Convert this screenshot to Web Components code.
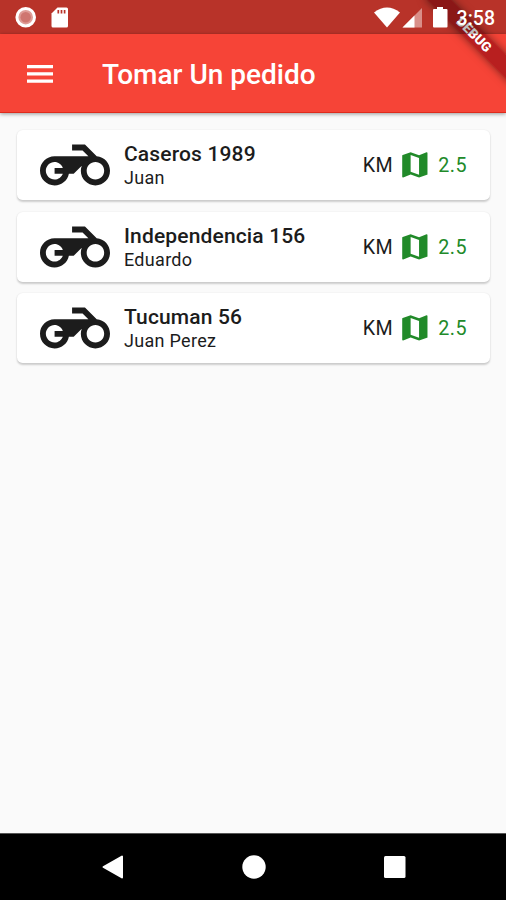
<!DOCTYPE html>
<html lang="es">
<head>
<meta charset="utf-8">
<title>Tomar Un pedido</title>
<style>
html,body{margin:0;height:100%;overflow:hidden}
body{font-family:Roboto,"Liberation Sans",sans-serif}
</style>
</head>
<body>
<phone-screen>
  <status-bar slot="status">3:58</status-bar>
  <debug-banner slot="banner">DEBUG</debug-banner>
  <app-header slot="header">Tomar Un pedido</app-header>
  <order-card km="2.5"><span slot="address">Caseros 1989</span><span slot="customer">Juan</span></order-card>
  <order-card km="2.5"><span slot="address">Independencia 156</span><span slot="customer">Eduardo</span></order-card>
  <order-card km="2.5"><span slot="address">Tucuman 56</span><span slot="customer">Juan Perez</span></order-card>
  <nav-bar slot="nav"></nav-bar>
</phone-screen>
<script>
const define = (name, html) => {
  customElements.define(name, class extends HTMLElement {
    constructor() {
      super();
      this.attachShadow({mode: 'open'}).innerHTML = html;
    }
    connectedCallback() {
      const km = this.shadowRoot.querySelector('.distance');
      if (km) km.textContent = this.getAttribute('km');
    }
  });
};

define('phone-screen', `
<style>
:host{display:flex;flex-direction:column;position:relative;width:506px;height:900px;overflow:hidden;background:linear-gradient(#f64437 34px,#fafafa 34px)}
main{flex:1;display:flex;flex-direction:column;gap:11.6px;padding:17px 16px 0 17px;min-height:0}
</style>
<slot name="status"></slot><slot name="header"></slot>
<main><slot></slot></main>
<slot name="nav"></slot><slot name="banner"></slot>`);

define('status-bar', `
<style>
:host{display:flex;flex:none;position:relative;z-index:3;height:34px;box-sizing:border-box;background:rgba(0,0,0,.25);color:#fff;font-size:19.5px;font-weight:500;line-height:37px}
svg{flex:none;display:block;width:456px}
.time{width:50px;box-sizing:border-box;padding-right:11px;direction:rtl;white-space:nowrap}
</style>
<svg width="456" height="34" viewBox="0 0 456 34">
<circle cx="25.7" cy="17.2" r="8.8" fill="#df9c97" stroke="#fff" stroke-width="3"/><circle cx="25.7" cy="17.2" r="5.2" fill="#cf7670"/>
<path fill="#fff" d="M57.5 7.5H66.5Q68 7.5 68 9V26Q68 27.5 66.5 27.5H53Q51.500 27.500 51.500 26V13.500Z"/>
<path d="M58.300 10v3.500M61.500 10v3.500M64.600 10v3.500" stroke="#b83228" stroke-width="1.700"/>
<path fill="#fff" d="M374 12.400Q387 2.500 400 12.400L387 27.500Z"/>
<path fill="#d98f89" d="M422 8V27.500H402.500Z"/><path fill="#fff" d="M414.500 15.500V27.500H402.500Z"/>
<path fill="#fff" d="M437 7h6v2h3.500q1 0 1 1V26.500q0 1-1 1h-12.500q-1 0-1-1V10q0-1 1-1h3z"/>
</svg><span class="time"><slot></slot></span>`);

define('app-header', `
<style>
:host{display:flex;flex:none;align-items:center;height:79px;box-sizing:border-box;padding-left:27px;background:#f64437;color:#fff;font-size:28px;font-weight:500;position:relative;border-bottom:1px solid #df2b1c;box-shadow:0 1px 4px rgba(0,0,0,.4)}
svg{display:block;margin:1px 49px 0 0}
.title{white-space:nowrap;margin-top:2px}
</style>
<svg width="26" height="18" viewBox="0 0 26 18" fill="#fff"><path d="M0 0H26V3.200H0ZM0 7.300H26V10.500H0ZM0 14.600H26V17.800H0Z"/></svg>
<span class="title"><slot></slot></span>`);

define('order-card', `
<style>
:host{display:flex;flex:none;align-items:center;height:70px;box-sizing:border-box;padding:0 23px 0 23px;background:#fff;border-radius:5.600px;box-shadow:0 1.500px 2px rgba(0,0,0,.18),0 0 2px rgba(0,0,0,.05);color:#1c1c1c}
svg{display:block;flex:none}
.bike{width:70px;height:70px;margin-right:14px}
.text{flex:1;display:flex;flex-direction:column;white-space:nowrap}
.address{font-size:21px;font-weight:500;line-height:25px;letter-spacing:.15px}
.customer{font-size:18px;line-height:21px;letter-spacing:.3px}
.unit{font-size:19.700px;letter-spacing:.35px;margin-top:1px}
.map{width:33.700px;height:33.700px;margin:0 6.500px 0 5px}
.distance{font-size:19.700px;color:#218a29;letter-spacing:.5px;margin-top:1px}
</style>
<svg class="bike" viewBox="0 0 24 24" fill="#1c1c1c"><path d="M19.440 9.030L15.410 5H11v2h3.590l2 2H5c-2.800 0-5 2.200-5 5s2.200 5 5 5c2.460 0 4.450-1.690 4.900-4h1.650l2.770-2.770c-.210.540-.320 1.140-.320 1.770 0 2.800 2.200 5 5 5s5-2.200 5-5c0-2.650-1.970-4.770-4.560-4.970zM7.820 15C7.400 16.150 6.280 17 5 17c-1.630 0-3-1.370-3-3s1.370-3 3-3c1.280 0 2.400.850 2.820 2H5v2h2.820zM19 17c-1.660 0-3-1.340-3-3s1.340-3 3-3 3 1.340 3 3-1.340 3-3 3z"/></svg>
<div class="text"><div class="address"><slot name="address"></slot></div><div class="customer"><slot name="customer"></slot></div></div>
<span class="unit">KM</span>
<svg class="map" viewBox="0 0 24 24" fill="#218a29"><path d="M20.500 3l-.160.030L15 5.100 9 3 3.360 4.900c-.210.070-.360.250-.360.480V20.500c0 .280.220.500.500.500l.160-.030L9 18.900l6 2.100 5.640-1.900c.210-.070.360-.250.360-.480V3.500c0-.280-.220-.500-.500-.500zM15 19l-6-2.110V5l6 2.110V19z"/></svg>
<span class="distance"></span>`);

define('nav-bar', `
<style>
:host{display:flex;flex:none;justify-content:space-between;align-items:center;height:67px;box-sizing:border-box;padding:0 99.500px 0 101px;background:#000;border-top:1px solid #555}
svg{display:block}
</style>
<svg width="24" height="26" viewBox="0 0 24 26"><path d="M2.500 13L21 2.500V23.500Z" fill="#fff" stroke="#fff" stroke-width="2" stroke-linejoin="round"/></svg>
<svg width="24" height="24" viewBox="0 0 24 24"><circle cx="12" cy="12" r="11.700" fill="#fff"/></svg>
<svg width="24" height="24" viewBox="0 0 24 24"><rect x="1" y="1" width="21.500" height="22" rx="1.500" fill="#fff"/></svg>`);

define('debug-banner', `
<style>
:host{display:block;position:absolute;z-index:2;top:0;right:0;width:90px;height:90px;overflow:hidden;pointer-events:none}
div{position:absolute;left:-3.500px;top:26px;width:122px;height:17px;line-height:17px;text-align:center;transform:rotate(45deg);background:rgba(160,16,22,.72);box-shadow:0 0 8px rgba(0,0,0,.5);color:#fff;font-size:13.500px;font-weight:900}
</style>
<div><slot></slot></div>`);
</script>
</body>
</html>
